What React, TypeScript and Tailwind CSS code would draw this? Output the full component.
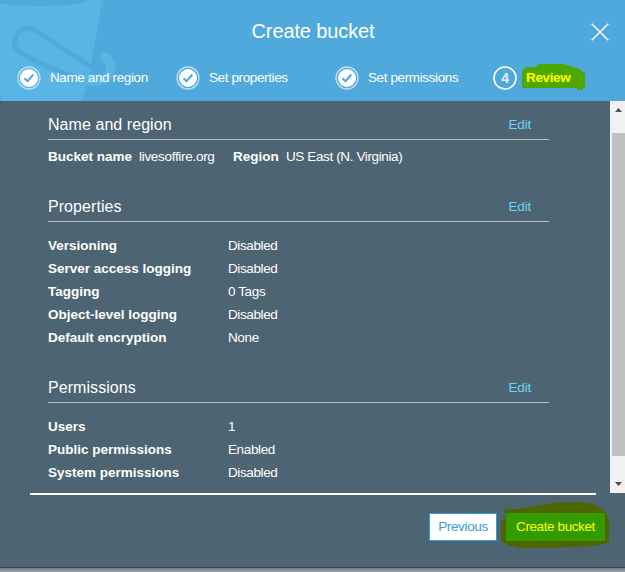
import React from "react";

const steps = ["Name and region", "Set properties", "Set permissions"];

const properties = [
  ["Versioning", "Disabled"],
  ["Server access logging", "Disabled"],
  ["Tagging", "0 Tags"],
  ["Object-level logging", "Disabled"],
  ["Default encryption", "None"],
];

const permissions = [
  ["Users", "1"],
  ["Public permissions", "Enabled"],
  ["System permissions", "Disabled"],
];

function BucketArt() {
  return (
    <svg className="absolute left-0 top-0" width="125" height="101" viewBox="0 0 125 101">
      <path d="M0 0H102.500L91 65L86 88Q84 96 81 101H2L0 93Z" fill="#58b5e4" />
      <path d="M0 0H88C82 4 63 6 40 6C22 6 8 5 0 3Z" fill="#4fa9dd" />
      <path
        d="M91 67L38 32C32 27 23 27 18 33C12 40 14 48 21 53Q46 68 75 77"
        fill="none"
        stroke="#4fa9dd"
        strokeWidth="5"
      />
      <path
        d="M86 80C95 83 105 81 109 75C112 69 110 62 105 57"
        fill="none"
        stroke="#58b5e4"
        strokeWidth="9"
        strokeLinecap="round"
      />
    </svg>
  );
}

function CheckCircle() {
  return (
    <svg className="shrink-0" width="24" height="24" viewBox="0 0 24 24">
      <circle cx="12" cy="12" r="11" fill="none" stroke="#bfe0f4" strokeWidth="1.300" />
      <circle cx="12" cy="12" r="9" fill="#fff" />
      <path d="M7.500 12.300L10.500 15.300L16.300 8.500" fill="none" stroke="#4fa9dd" strokeWidth="2" />
    </svg>
  );
}

function SectionTitle({ title }: { title: string }) {
  return (
    <div className="flex h-[31px] w-[501px] items-center justify-between border-b border-[#b8c1c7] pt-[2px]">
      <h2 className="text-[16px] leading-[20px] tracking-[0.06px]">{title}</h2>
      <span className="mr-[18px] leading-[20px] tracking-[-0.2px] text-[#6cd3fb]">Edit</span>
    </div>
  );
}

function Rows({ rows }: { rows: string[][] }) {
  return (
    <dl>
      {rows.map(([name, value]) => (
        <div key={name} className="flex h-[23px] items-center">
          <dt className="w-[180px] font-bold tracking-normal">{name}</dt>
          <dd>{value}</dd>
        </div>
      ))}
    </dl>
  );
}

export default function App() {
  return (
    <div className="flex h-[572px] w-[625px] flex-col overflow-hidden bg-[#4d6472] font-['Liberation_Sans',Arial,sans-serif] text-[13.5px] tracking-[-0.38px] text-white">
      <header className="relative h-[101px] shrink-0 bg-[#4fa9dd]">
        <BucketArt />
        <div className="relative flex h-[62px] justify-center pt-[18px]">
          <h1 className="pl-[1px] text-[20px] leading-[26px] tracking-[-0.12px]">Create bucket</h1>
          <svg className="absolute left-[591px] top-[23px]" width="18" height="18" viewBox="0 0 18 18">
            <path d="M0.700 0.700L17.300 17.300M17.300 0.700L0.700 17.300" stroke="#fff" strokeWidth="1.500" />
          </svg>
        </div>
        <nav className="relative flex pl-[17px] pt-1">
          {steps.map((step) => (
            <div key={step} className="flex h-6 w-[159px] items-center gap-[9px]">
              <CheckCircle />
              <span className="whitespace-nowrap">{step}</span>
            </div>
          ))}
          <div className="flex h-6 items-center">
            <svg className="-ml-[1px] shrink-0" width="24" height="24" viewBox="0 0 24 24">
              <circle cx="12" cy="12" r="11" fill="none" stroke="#fff" strokeWidth="1.600" />
              <text x="12" y="17" textAnchor="middle" fontSize="14" fontWeight="700" fill="#e6f3fb">
                4
              </text>
            </svg>
            <span className="relative ml-[9px] font-bold tracking-[-0.35px] text-[#ffff00]">
              <svg className="absolute -left-[4px] -top-[4px]" width="64" height="28" viewBox="0 0 64 28">
                <path d="M0 7L4 3L15 3V1L20 0H41L49 2L57 5L63 9V24H61V26H55V24H0Z" fill="#4fa800" />
              </svg>
              <span className="relative">Review</span>
            </span>
          </div>
        </nav>
      </header>
      <div className="flex h-[392px] shrink-0">
        <main className="w-[610px] pl-[48px] pt-2">
          <SectionTitle title="Name and region" />
          <div className="flex h-[34px] items-center">
            <b className="w-[91px] tracking-normal">Bucket name</b>
            <span className="w-[94px] tracking-[-0.3px]">livesoffire.org</span>
            <b className="w-[53px] tracking-normal">Region</b>
            <span>US East (N. Virginia)</span>
          </div>
          <div className="mt-[17px]">
            <SectionTitle title="Properties" />
          </div>
          <div className="pt-[13px]">
            <Rows rows={properties} />
          </div>
          <div className="mt-[22px]">
            <SectionTitle title="Permissions" />
          </div>
          <div className="pt-[13px]">
            <Rows rows={permissions} />
          </div>
        </main>
        <div className="flex w-[15px] flex-col items-end bg-[#f1f1f1]">
          <svg width="13" height="32" viewBox="0 0 13 32">
            <path d="M3 11L6.500 7L10 11Z" fill="#505050" />
          </svg>
          <div className="h-[323px] w-[13px] bg-[#c1c1c1]" />
          <svg width="13" height="37" viewBox="0 0 13 37">
            <path d="M3 26L6.500 30L10 26Z" fill="#505050" />
          </svg>
        </div>
      </div>
      <footer className="flex h-[74px] shrink-0 flex-col pl-[30px]">
        <div className="h-[2px] w-[566px] bg-white" />
        <div className="ml-[399px] mt-[18px] flex gap-[9px]">
          <button className="h-7 w-[68px] border border-[#2f9be0] bg-white tracking-[-0.35px] text-[#3b9bdc]">Previous</button>
          <button className="relative h-7 w-[99px] tracking-[-0.4px] text-[#ffff00]">
            <svg className="absolute -left-[5px] -top-[11px]" width="109" height="46" viewBox="0 0 109 46">
              <path d="M0 20L4 17V7H17L35 4L53 1L78 0L92 2L100 6L105 11L108 18V39L104 42L91 44L68 45L50 46H18L7 43L0 39Z" fill="#4d6600" />
              <path d="M5 11H104V39H5Z" fill="#339b00" />
            </svg>
            <span className="relative whitespace-nowrap">Create bucket</span>
          </button>
        </div>
      </footer>
      <div className="h-[5px] shrink-0 border-t border-[#3d454d] bg-gradient-to-b from-[#737b84] to-[#9ba3aa]" />
    </div>
  );
}
